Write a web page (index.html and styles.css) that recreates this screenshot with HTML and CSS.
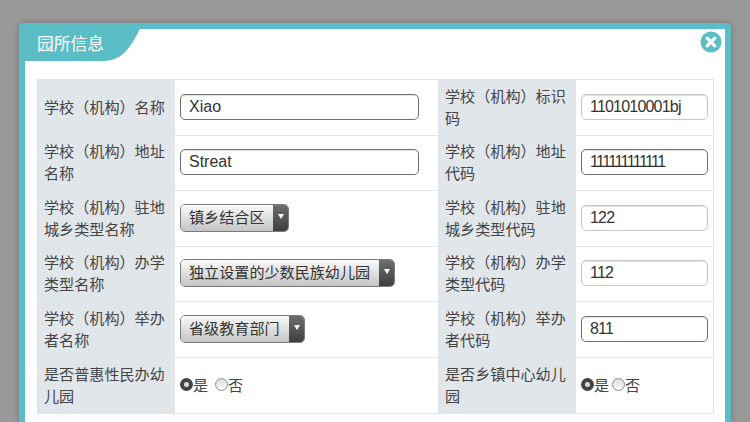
FILE: index.html
```html
<!DOCTYPE html>
<html lang="zh">
  <head>
    <meta charset="UTF-8" />
    <title>园所信息</title>
    <link rel="stylesheet" href="styles.css">
  </head>
  <body>
    <div class="modal">
      <div class="modal-head">
        <div class="tab">
          <svg class="tab-bg" width="115" height="32" viewBox="0 0 115 32">
            <path d="M0 0H115C107 14 100 32 78 32H0Z" fill="#5bbec6" />
          </svg>
          <span class="tab-title">园所信息</span>
        </div>
        <svg class="close" width="22" height="22" viewBox="0 0 22 22">
          <circle cx="11" cy="11" r="10.5" fill="#5bbec6" />
          <path d="M7.2 7.2L14.8 14.8M14.8 7.2L7.2 14.8" stroke="#fff" stroke-width="3.2" stroke-linecap="round" />
        </svg>
      </div>

      <table class="info">
        <tr class="tall">
          <th>学校（机构）名称</th>
          <td><div class="field dark">Xiao</div></td>
          <th>学校（机构）标识码</th>
          <td><div class="field num">1101010001bj</div></td>
        </tr>
        <tr>
          <th>学校（机构）地址名称</th>
          <td><div class="field dark">Streat</div></td>
          <th>学校（机构）地址代码</th>
          <td><div class="field dark ones">111111111111</div></td>
        </tr>
        <tr class="tall">
          <th>学校（机构）驻地城乡类型名称</th>
          <td>
            <div class="select"><span class="select-text">镇乡结合区</span><span class="select-arrow"></span></div>
          </td>
          <th>学校（机构）驻地城乡类型代码</th>
          <td><div class="field num">122</div></td>
        </tr>
        <tr>
          <th>学校（机构）办学类型名称</th>
          <td>
            <div class="select"><span class="select-text">独立设置的少数民族幼儿园</span><span class="select-arrow"></span></div>
          </td>
          <th>学校（机构）办学类型代码</th>
          <td><div class="field num">112</div></td>
        </tr>
        <tr class="tall">
          <th>学校（机构）举办者名称</th>
          <td>
            <div class="select"><span class="select-text">省级教育部门</span><span class="select-arrow"></span></div>
          </td>
          <th>学校（机构）举办者代码</th>
          <td><div class="field dark num">811</div></td>
        </tr>
        <tr class="tall">
          <th>是否普惠性民办幼儿园</th>
          <td>
            <div class="radios wide">
              <span class="radio-item"><span class="radio on"></span>是</span>
              <span class="radio-item"><span class="radio"></span>否</span>
            </div>
          </td>
          <th>是否乡镇中心幼儿园</th>
          <td>
            <div class="radios">
              <span class="radio-item"><span class="radio on"></span>是</span>
              <span class="radio-item"><span class="radio"></span>否</span>
            </div>
          </td>
        </tr>
      </table>
    </div>
  </body>
</html>
```

FILE: styles.css
```css
html,
body {
  height: 100%;
}
body {
  margin: 0;
  padding: 23px 19px 0;
  box-sizing: border-box;
  overflow: hidden;
  background-color: #999;
  font-family: "Liberation Sans", "Noto Sans CJK SC", sans-serif;
  font-size: 15.1px;
  color: #333;
}

/* Modal */
.modal {
  height: 399px;
  box-sizing: border-box;
  background-color: #fff;
  border: 6px solid #5bbec6;
  border-bottom-width: 0;
  border-radius: 5px 5px 0 0;
  box-shadow: 0 0 6px rgba(0, 0, 0, 0.25);
  padding: 0 11px 0 12px;
}
.modal-head {
  height: 50px;
  margin: 0 -11px 0 -12px;
  display: flex;
  justify-content: space-between;
  align-items: flex-start;
}
.tab {
  position: relative;
  width: 115px;
  height: 32px;
}
.tab-bg {
  position: absolute;
  left: 0;
  top: 0;
}
.tab-title {
  position: relative;
  display: block;
  padding-left: 12px;
  line-height: 32px;
  font-size: 16.8px;
  color: #fff;
}
.close {
  margin: 2px 3px 0 0;
}

/* Table */
.info {
  width: 677px;
  table-layout: fixed;
  border-collapse: collapse;
}
.info th,
.info td {
  height: 55px;
  padding: 0 5px;
  border: 1px solid #e3e4e6;
  box-sizing: border-box;
}
.info tr.tall th,
.info tr.tall td {
  height: 56px;
}
.info th {
  width: 137px;
  padding: 0 6px;
  background-color: #e1e6eb;
  font-weight: normal;
  text-align: left;
  line-height: 22px;
  color: #444;
}
.info td:nth-child(2) {
  width: 264px;
  padding-right: 19px;
}

/* Form controls */
.field {
  height: 26px;
  line-height: 24px;
  margin-bottom: 2px;
  box-sizing: border-box;
  padding: 0 8px;
  border: 1px solid #c6c6c6;
  border-radius: 5px;
  background-color: #fff;
  font-size: 16px;
  color: #333;
  box-shadow: inset 0 1px 1px rgba(0, 0, 0, 0.12);
}
.field.dark {
  border-color: #6f6f6f;
}
.field.num {
  letter-spacing: -0.8px;
}
.field.ones {
  letter-spacing: -1.6px;
}
.select {
  display: inline-flex;
  height: 28px;
  margin-bottom: 2px;
  box-sizing: border-box;
  border: 1px solid #7c7c7c;
  border-radius: 5px;
  overflow: hidden;
  vertical-align: middle;
}
.select-text {
  padding: 0 9px 0 8px;
  line-height: 26px;
  background: linear-gradient(#fafafa, #c4c4c4);
  color: #333;
}
.select-arrow {
  position: relative;
  width: 15px;
  background: linear-gradient(#6e6e6e, #3f3f3f);
}
.select-arrow:before {
  content: "";
  position: absolute;
  left: 5px;
  top: 9px;
  border-top: 5px solid #fff;
  border-left: 3px solid transparent;
  border-right: 3px solid transparent;
}
.radios {
  display: flex;
  align-items: center;
  gap: 3px;
  margin-bottom: 3px;
  color: #444;
}
.radios.wide {
  gap: 7px;
}
.radio-item {
  display: flex;
  align-items: center;
}
.radio {
  width: 13px;
  height: 13px;
  box-sizing: border-box;
  border: 1px solid #8d8d8d;
  border-radius: 50%;
  background: linear-gradient(#ddd, #fafafa);
}
.radio.on {
  border: 4px solid #444;
  background: #ddd;
}
```
